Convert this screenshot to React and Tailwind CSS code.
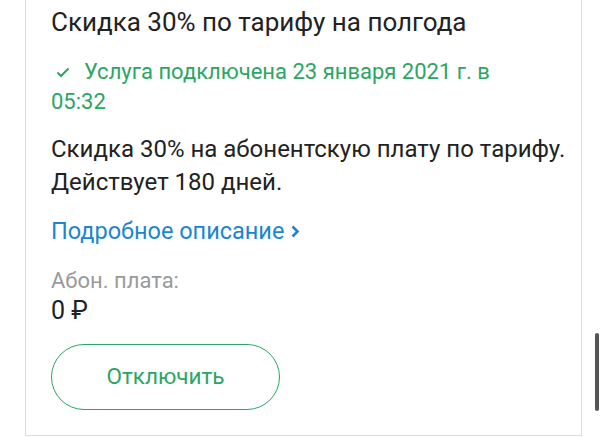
import React from "react";

export default function App() {
  return (
    <div className="relative w-[604px] h-[438px] bg-white overflow-hidden" style={{ fontFamily: "Roboto, 'Noto Sans', sans-serif" }}>
      <div className="ml-[25px] w-[557px] h-[436px] border-x border-b border-[#dcdcdc] pl-[25px] pr-0 pt-[5px]">
        <div className="text-[26px] leading-[34px] text-[#222] whitespace-nowrap">Скидка 30% по тарифу на полгода</div>
        <div className="mt-[18px] w-[470px] text-[22px] leading-[30px] text-[#2ba564]">
          <span className="inline-block w-[33px] pl-[5px]">
            <svg width="14" height="11" viewBox="0 0 14 11" className="inline-block align-[1px]">
              <path d="M1.5 5.5 L5 9 L12.5 1.5" fill="none" stroke="#2ba564" strokeWidth="2" />
            </svg>
          </span>
          Услуга подключена 23 января 2021 г. в 05:32
        </div>
        <div className="mt-[16px] text-[24px] leading-[33px] text-[#222]">
          Скидка 30% на абонентскую плату по тарифу. Действует 180 дней.
        </div>
        <div className="mt-[17px] text-[23.5px] leading-[30px] text-[#1b86cf] flex items-center">
          Подробное описание
          <svg width="10" height="15" viewBox="0 0 10 15" className="ml-[6px]">
            <path d="M2.5 2.5 L7.5 7.5 L2.5 12.5" fill="none" stroke="#1b86cf" strokeWidth="2.6" />
          </svg>
        </div>
        <div className="mt-[20px] text-[22px] leading-[30px] text-[#9a9a9a]">Абон. плата:</div>
        <div className="text-[25px] leading-[30px] text-[#222]">0 ₽</div>
        <button className="mt-[18px] w-[229px] h-[66px] rounded-full border-[1.5px] border-[#2ba564] text-[22.5px] text-[#2ba564] bg-white">
          Отключить
        </button>
      </div>
      <div className="absolute left-[595px] top-[333px] w-[4px] h-[78px] rounded-full bg-[#555]" />
    </div>
  );
}
